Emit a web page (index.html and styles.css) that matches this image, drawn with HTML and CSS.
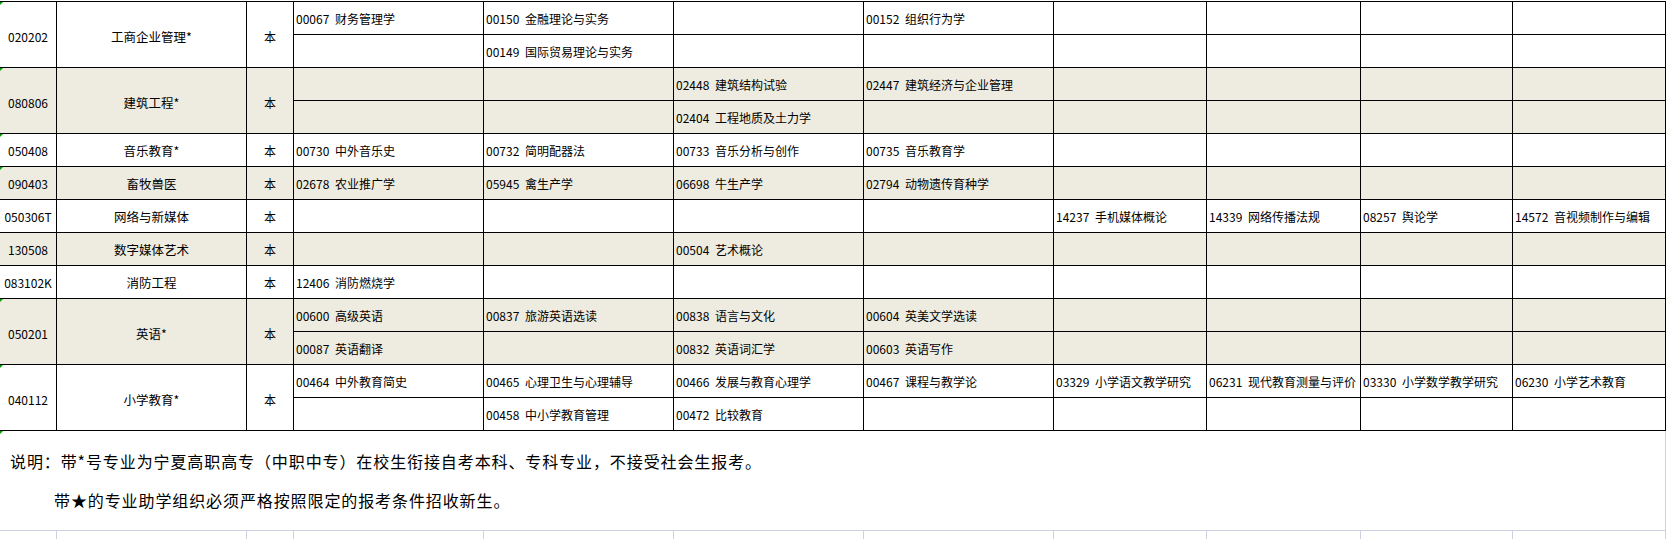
FILE: index.html
```html
<!DOCTYPE html>
<html lang="zh-CN">
<head>
<meta charset="utf-8">
<title>专业课程表</title>
<link rel="stylesheet" href="styles.css">
</head>
<body>
<div class="sheet">
  <div class="grid">
    <!-- 020202 -->
    <div class="c ctr s2 mark">020202</div>
    <div class="c ctr s2 name">工商企业管理*</div>
    <div class="c ctr s2">本</div>
    <div class="c">00067 财务管理学</div><div class="c">00150 金融理论与实务</div><div class="c"></div><div class="c">00152 组织行为学</div><div class="c"></div><div class="c"></div><div class="c"></div><div class="c"></div>
    <div class="c"></div><div class="c">00149 国际贸易理论与实务</div><div class="c"></div><div class="c"></div><div class="c"></div><div class="c"></div><div class="c"></div><div class="c"></div>

    <!-- 080806 -->
    <div class="c b ctr s2 mark">080806</div>
    <div class="c b ctr s2 name">建筑工程*</div>
    <div class="c b ctr s2">本</div>
    <div class="c b"></div><div class="c b"></div><div class="c b">02448 建筑结构试验</div><div class="c b">02447 建筑经济与企业管理</div><div class="c b"></div><div class="c b"></div><div class="c b"></div><div class="c b"></div>
    <div class="c b"></div><div class="c b"></div><div class="c b">02404 工程地质及土力学</div><div class="c b"></div><div class="c b"></div><div class="c b"></div><div class="c b"></div><div class="c b"></div>

    <!-- 050408 -->
    <div class="c ctr mark">050408</div>
    <div class="c ctr name">音乐教育*</div>
    <div class="c ctr">本</div>
    <div class="c">00730 中外音乐史</div><div class="c">00732 简明配器法</div><div class="c">00733 音乐分析与创作</div><div class="c">00735 音乐教育学</div><div class="c"></div><div class="c"></div><div class="c"></div><div class="c"></div>

    <!-- 090403 -->
    <div class="c b ctr mark">090403</div>
    <div class="c b ctr name">畜牧兽医</div>
    <div class="c b ctr">本</div>
    <div class="c b">02678 农业推广学</div><div class="c b">05945 禽生产学</div><div class="c b">06698 牛生产学</div><div class="c b">02794 动物遗传育种学</div><div class="c b"></div><div class="c b"></div><div class="c b"></div><div class="c b"></div>

    <!-- 050306T -->
    <div class="c ctr">050306T</div>
    <div class="c ctr name">网络与新媒体</div>
    <div class="c ctr">本</div>
    <div class="c"></div><div class="c"></div><div class="c"></div><div class="c"></div><div class="c">14237 手机媒体概论</div><div class="c">14339 网络传播法规</div><div class="c">08257 舆论学</div><div class="c">14572 音视频制作与编辑</div>

    <!-- 130508 -->
    <div class="c b ctr">130508</div>
    <div class="c b ctr name">数字媒体艺术</div>
    <div class="c b ctr">本</div>
    <div class="c b"></div><div class="c b"></div><div class="c b">00504 艺术概论</div><div class="c b"></div><div class="c b"></div><div class="c b"></div><div class="c b"></div><div class="c b"></div>

    <!-- 083102K -->
    <div class="c ctr">083102K</div>
    <div class="c ctr name">消防工程</div>
    <div class="c ctr">本</div>
    <div class="c">12406 消防燃烧学</div><div class="c"></div><div class="c"></div><div class="c"></div><div class="c"></div><div class="c"></div><div class="c"></div><div class="c"></div>

    <!-- 050201 -->
    <div class="c b ctr s2 mark">050201</div>
    <div class="c b ctr s2 name">英语*</div>
    <div class="c b ctr s2">本</div>
    <div class="c b">00600 高级英语</div><div class="c b">00837 旅游英语选读</div><div class="c b">00838 语言与文化</div><div class="c b">00604 英美文学选读</div><div class="c b"></div><div class="c b"></div><div class="c b"></div><div class="c b"></div>
    <div class="c b">00087 英语翻译</div><div class="c b"></div><div class="c b">00832 英语词汇学</div><div class="c b">00603 英语写作</div><div class="c b"></div><div class="c b"></div><div class="c b"></div><div class="c b"></div>

    <!-- 040112 -->
    <div class="c ctr s2 mark">040112</div>
    <div class="c ctr s2 name">小学教育*</div>
    <div class="c ctr s2">本</div>
    <div class="c">00464 中外教育简史</div><div class="c">00465 心理卫生与心理辅导</div><div class="c">00466 发展与教育心理学</div><div class="c">00467 课程与教学论</div><div class="c">03329 小学语文教学研究</div><div class="c">06231 现代教育测量与评价</div><div class="c">03330 小学数学教学研究</div><div class="c">06230 小学艺术教育</div>
    <div class="c"></div><div class="c">00458 中小学教育管理</div><div class="c">00472 比较教育</div><div class="c"></div><div class="c"></div><div class="c"></div><div class="c"></div><div class="c"></div>
  </div>

  <div class="notes mark">
    <p class="note1">说明：带*号专业为宁夏高职高专（中职中专）在校生衔接自考本科、专科专业，不接受社会生报考。</p>
    <p class="note2">带★的专业助学组织必须严格按照限定的报考条件招收新生。</p>
  </div>

  <div class="gridlines">
    <div></div><div></div><div></div><div></div><div></div><div></div><div></div><div></div><div></div><div></div><div></div>
  </div>
</div>
</body>
</html>
```

FILE: styles.css
```css
html, body {
  margin: 0;
  padding: 0;
  background: #ffffff;
}

body {
  width: 1670px;
  height: 539px;
  overflow: hidden;
  font-family: "Noto Sans CJK SC", "Liberation Sans", sans-serif;
  color: #000;
}

.sheet {
  width: 1666px;
  padding-top: 1px;
}

.grid,
.gridlines {
  display: grid;
  grid-template-columns: 57px 190px 47px 190px 190px 190px 190px 153px 154px 152px 153px;
}

.grid {
  grid-auto-rows: 33px;
  border-top: 1px solid #000;
}

.c {
  position: relative;
  box-sizing: border-box;
  display: flex;
  align-items: center;
  padding: 2px 0 0 2px;
  border-right: 1px solid #000;
  border-bottom: 1px solid #000;
  font-size: 12px;
  line-height: 14px;
  word-spacing: 3px;
  white-space: nowrap;
  overflow: hidden;
  background: #ffffff;
}

.c.b {
  background: #eeece1;
}

.ctr {
  justify-content: center;
  padding-left: 0;
}

.name {
  font-size: 12.5px;
}

.s2 {
  grid-row: span 2;
  padding-top: 4px;
}

.mark::before {
  content: "";
  position: absolute;
  left: 0;
  top: 0;
  width: 0;
  height: 0;
  border-top: 3px solid #00a000;
  border-right: 3px solid transparent;
}

.notes {
  position: relative;
  box-sizing: border-box;
  height: 100px;
  padding-top: 11px;
  border-right: 1px solid #cdd2e3;
  border-bottom: 1px solid #cdd2e3;
}

.notes p {
  margin: 0;
  font-size: 16px;
  line-height: 39px;
  letter-spacing: 0.9px;
  white-space: nowrap;
}

.note1 {
  padding-left: 10px;
}

.note2 {
  padding-left: 54px;
}

.gridlines {
  height: 9px;
}

.gridlines div {
  border-right: 1px solid #cdd2e3;
}
```
